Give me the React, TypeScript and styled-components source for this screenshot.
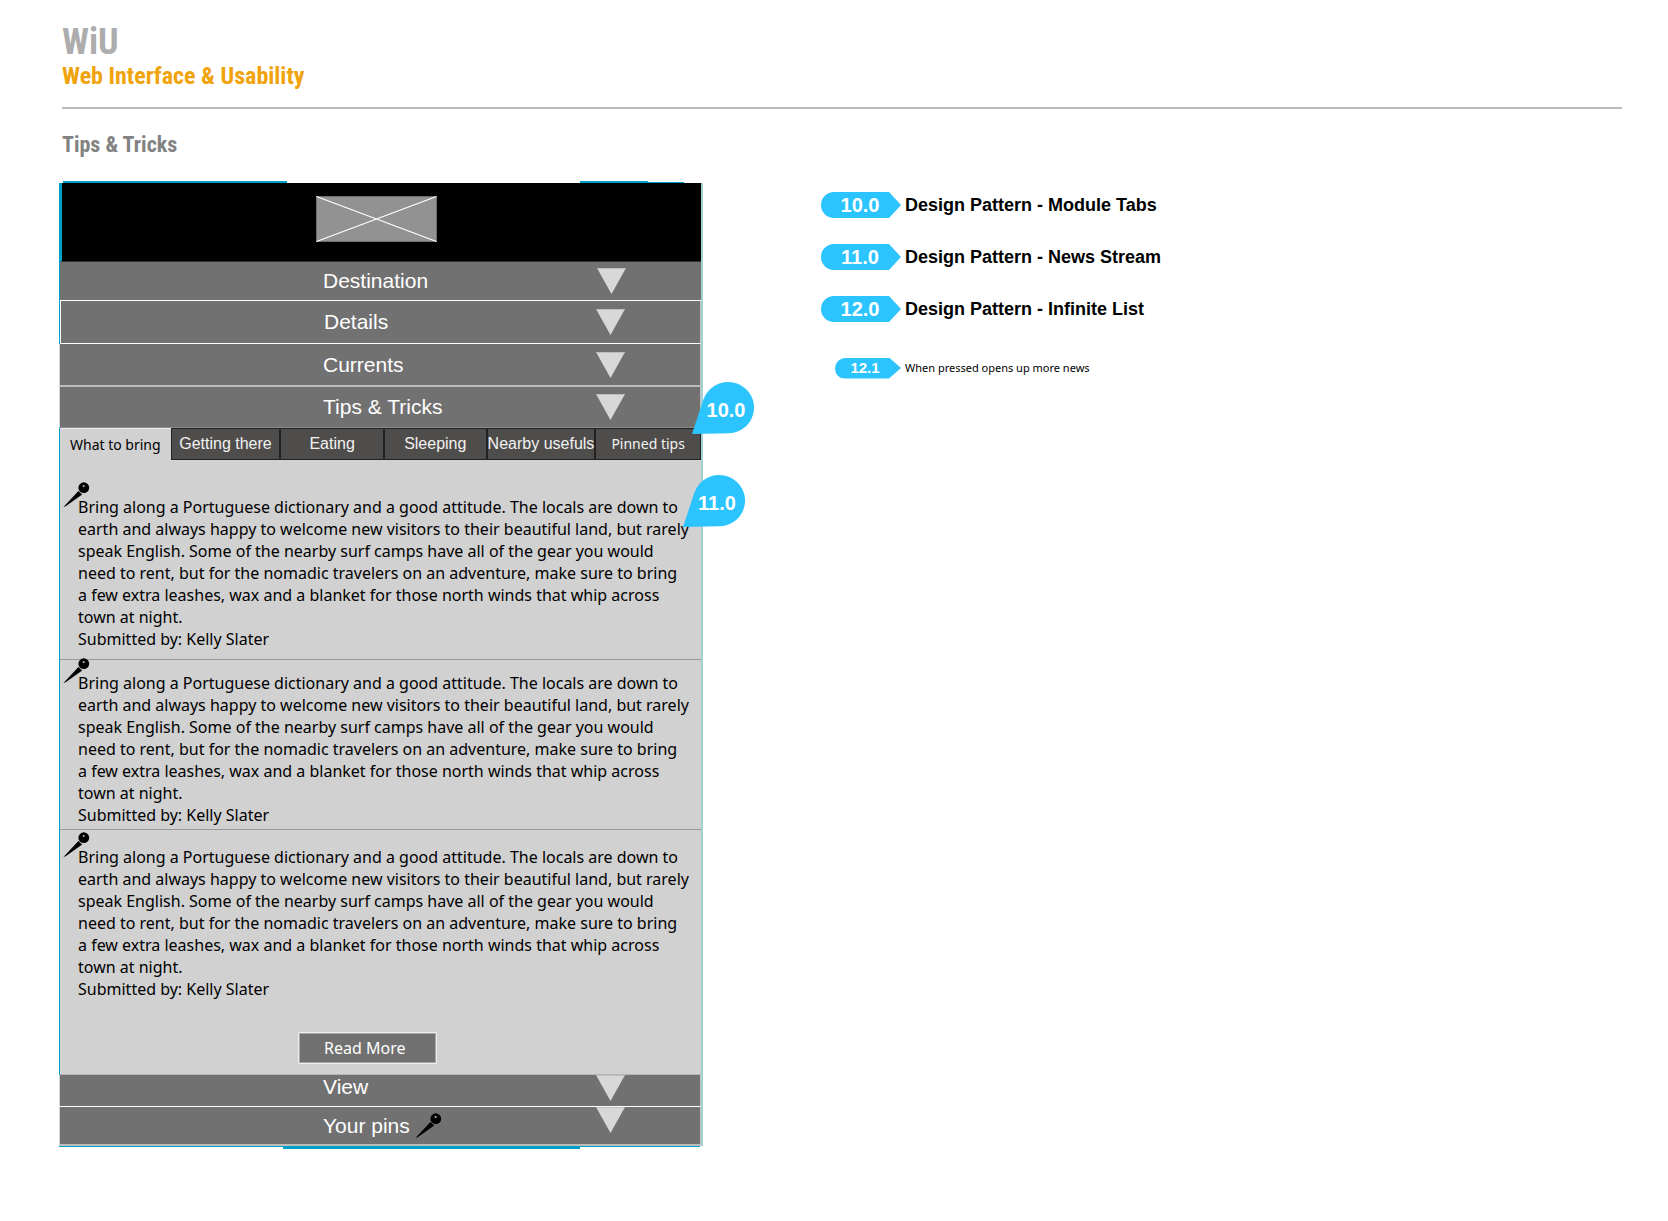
import React, { useState } from "react";
import styled, { createGlobalStyle, css } from "styled-components";

const helvetica = `"Liberation Sans", Arial, Helvetica, sans-serif`;
const humanist = `"Noto Sans", "Open Sans", sans-serif`;
const condensed = `"Roboto Condensed", "Open Sans Condensed", "Liberation Sans Narrow", sans-serif`;

const color = {
  cyan: "#009fc8",
  paleCyan: "#a5cfd6",
  marker: "#2bc4ff",
  bar: "#717171",
  panel: "#d1d1d1",
  tab: "#4f4d4b",
  tabEdge: "#222222",
};

const GlobalStyle = createGlobalStyle`
  *, *::before, *::after { box-sizing: border-box; }
  body { margin: 0; background: #ffffff; color: #000000; font-family: ${helvetica}; }
  h1, h2, h3, p, ul, ol { margin: 0; padding: 0; }
  ul, ol { list-style: none; }
  button { margin: 0; border: 0; border-radius: 0; cursor: pointer; }
  svg { display: block; }
`;

/* ---------- page ---------- */

const Page = styled.div`
  padding: 22px 46px 72px 59px;
`;

const Masthead = styled.header`
  margin-left: 3px;
  padding-bottom: 17px;
  border-bottom: 2px solid #bcbcbc;
  font-family: ${condensed};
  font-weight: 700;
`;

const Brand = styled.h1`
  font-size: 36px;
  line-height: 40px;
  color: #adadad;
`;

const Tagline = styled.p`
  font-size: 24px;
  line-height: 28px;
  color: #f0a30a;
`;

const SectionTitle = styled.h2`
  margin: 22px 0 22px 3px;
  font-family: ${condensed};
  font-size: 22px;
  line-height: 28px;
  color: #828282;
`;

const Columns = styled.main`
  display: grid;
  grid-template-columns: minmax(644px, 41%) 1fr;
  column-gap: 116px;
  align-items: start;
`;

/* ---------- wireframe device ---------- */

const Device = styled.div`
  display: flex;
  flex-direction: column;
`;

const TopTrim = styled.div`
  display: grid;
  grid-template-columns: 4fr 224fr 293fr 68fr 36fr 19fr;
  height: 2px;
`;

const BottomTrim = styled.div`
  display: grid;
  grid-template-columns: 224fr 297fr 120fr 3fr;
  height: 3px;
`;

const TrimSegment = styled.span<{ $column: number; $height: number; $low?: boolean }>`
  grid-column: ${(p) => p.$column};
  align-self: ${(p) => (p.$low ? "end" : "start")};
  height: ${(p) => p.$height}px;
  background: ${color.cyan};
`;

const Screen = styled.div`
  border-left: 1px solid ${color.cyan};
  border-right: 2px solid ${color.paleCyan};
`;

const Banner = styled.div`
  display: flex;
  height: 79px;
  padding: 13px 0 0 254px;
  border-left: 2px solid ${color.cyan};
  border-bottom: 1px solid #333333;
  background: #000000;
`;

type Frame = "inner" | "outer";

const Bar = styled.button<{
  $height: number;
  $line: string;
  $thick?: boolean;
  $frame?: Frame;
  $labelTop?: boolean;
  $arrowTop?: boolean;
}>`
  display: grid;
  grid-template-columns: 263px 1fr auto;
  align-items: center;
  width: 100%;
  height: ${(p) => p.$height}px;
  padding: 0 75px 0 0;
  border-bottom: ${(p) => (p.$thick ? 2 : 1)}px solid ${(p) => p.$line};
  background: ${color.bar};
  color: #ffffff;
  font-family: ${helvetica};
  font-size: 21px;
  line-height: 24px;
  text-align: left;

  ${(p) =>
    p.$frame === "inner" &&
    css`
      border-left: 1px solid #ffffff;
      border-right: 1px solid #c4c4c4;
    `}

  ${(p) =>
    p.$frame === "outer" &&
    css`
      width: calc(100% + 1px);
      margin-left: -1px;
      border-left: 1px solid #d0d8da;
      border-right: 1px solid #c4c4c4;
    `}

  & > span { align-self: ${(p) => (p.$labelTop ? "start" : "center")}; }
  & > svg { align-self: ${(p) => (p.$arrowTop ? "start" : "center")}; }
`;

const BarLabel = styled.span`
  grid-column: 2;
  display: flex;
  align-items: center;
  gap: 5px;
`;

const TabStrip = styled.div`
  display: grid;
  grid-template-columns: 111fr 110fr 104fr 103fr 107fr 106fr;
  height: 32px;
`;

const Tab = styled.button<{ $active: boolean; $humanist?: boolean }>`
  padding: 0;
  border: ${(p) => (p.$active ? "0" : `1px solid ${color.tabEdge}`)};
  border-top: 1px solid ${(p) => (p.$active ? "#eeeeee" : color.tabEdge)};
  background: ${(p) => (p.$active ? color.panel : color.tab)};
  color: ${(p) => (p.$active ? "#000000" : "#f2f2f2")};
  font-family: ${(p) => (p.$humanist ? humanist : helvetica)};
  font-size: ${(p) => (p.$humanist ? 14 : 16)}px;
  line-height: 20px;
  white-space: nowrap;
`;

const Panel = styled.section`
  position: relative;
  padding-bottom: 10px;
  border-bottom: 1px solid #b5b5b5;
  background: ${color.panel};
`;

const Post = styled.li<{ $top: number; $bottom: number; $last?: boolean }>`
  padding: ${(p) => p.$top}px 16px ${(p) => p.$bottom}px 18px;
  border-bottom: ${(p) => (p.$last ? "0" : "1px solid #999999")};
`;

const PostBody = styled.div`
  position: relative;
  font-family: ${humanist};
  font-size: 16px;
  line-height: 22px;
  white-space: pre;
`;

const PinSpot = styled.span`
  position: absolute;
  top: -14px;
  left: -15px;
`;

const ReadMore = styled.button`
  display: block;
  width: 139px;
  height: 32px;
  margin: 32px 0 0 238px;
  padding: 0 0 0 25px;
  border: 1px solid #eeeeee;
  background: ${color.bar};
  box-shadow: inset 0 0 0 1px #a9a9a9;
  color: #ffffff;
  font-family: ${humanist};
  font-size: 16px;
  line-height: 22px;
  text-align: left;
`;

/* ---------- callout markers ---------- */

const Anchor = styled.div`
  position: relative;
`;

const Callout = styled.div<{ $right: number; $top: number }>`
  position: absolute;
  z-index: 2;
  top: ${(p) => p.$top}px;
  right: ${(p) => p.$right}px;
  display: grid;
  place-items: center;
  width: 62px;
  height: 52px;
  color: #ffffff;
  font-size: 20px;
  font-weight: 700;
  line-height: 24px;

  & > * { grid-area: 1 / 1; }
`;

const CalloutText = styled.span`
  z-index: 1;
  padding: 4px 0 0 6px;
`;

/* ---------- legend ---------- */

const Legend = styled.ol`
  margin-top: -2px;
`;

const LegendItem = styled.li<{ $minor?: boolean }>`
  display: grid;
  grid-template-columns: 82px 1fr;
  column-gap: 4px;
  align-items: center;
  height: ${(p) => (p.$minor ? 66 : 52)}px;
  font-family: ${(p) => (p.$minor ? humanist : helvetica)};
  font-size: ${(p) => (p.$minor ? 11 : 18)}px;
  font-weight: ${(p) => (p.$minor ? 400 : 700)};
  line-height: 22px;
`;

const Badge = styled.span<{ $minor?: boolean }>`
  justify-self: end;
  display: flex;
  align-items: center;
  justify-content: center;
  width: ${(p) => (p.$minor ? 66 : 80)}px;
  height: ${(p) => (p.$minor ? 21 : 26)}px;
  padding-right: ${(p) => (p.$minor ? 6 : 2)}px;
  border-radius: 13px 0 0 13px;
  background: ${color.marker};
  clip-path: polygon(0 0, calc(100% - 12px) 0, 100% 50%, calc(100% - 12px) 100%, 0 100%);
  color: #ffffff;
  font-family: ${helvetica};
  font-size: ${(p) => (p.$minor ? 15 : 20)}px;
  font-weight: 700;
`;

/* ---------- drawings ---------- */

const Placeholder = () => (
  <svg width="121" height="46" viewBox="0 0 121 46" role="img" aria-label="Logo placeholder">
    <rect x="0.5" y="0.5" width="120" height="45" fill="#929292" stroke="#6e6e6e" />
    <path d="M0.5 0.5 L120.5 45.5 M0.5 45.5 L120.5 0.5" stroke="#ffffff" strokeWidth="1.1" fill="none" />
  </svg>
);

const Arrow = () => (
  <svg width="29" height="26" viewBox="0 0 29 26" aria-hidden="true">
    <path d="M0 0 H29 L14.5 26 Z" fill="#d8d8d8" />
    <path d="M0 0.5 H29" stroke="#bdbdbd" />
  </svg>
);

const Pin = () => (
  <svg width="27" height="26" viewBox="0 0 27 26" aria-hidden="true">
    <path d="M0.3 25.3 L15.4 9 L19.2 12.6 L3 23.9 Z" fill="#000000" />
    <circle cx="20.8" cy="5.7" r="5.4" fill="#000000" />
    <circle cx="20.6" cy="3.9" r="1" fill="#c4c4c4" />
  </svg>
);

const Drop = () => (
  <svg width="62" height="52" viewBox="0 0 62 52" aria-hidden="true">
    <path d="M0 52 L11.4 17.5 A26 25.6 0 1 1 37 51.2 Z" fill={color.marker} />
  </svg>
);

/* ---------- data ---------- */

const upperBars: { label: string; height: number; line: string; thick?: boolean; frame?: Frame }[] = [
  { label: "Destination", height: 39, line: "#ffffff" },
  { label: "Details", height: 43, line: "#ffffff", frame: "inner" },
  { label: "Currents", height: 43, line: "#bbbbbb", thick: true, frame: "outer" },
  { label: "Tips & Tricks", height: 41, line: "#8a8a8a", frame: "outer" },
];

const tabs = [
  { label: "What to bring", humanist: true },
  { label: "Getting there" },
  { label: "Eating" },
  { label: "Sleeping" },
  { label: "Nearby usefuls" },
  { label: "Pinned tips", humanist: true },
];

const tip = `Bring along a Portuguese dictionary and a good attitude. The locals are down to
earth and always happy to welcome new visitors to their beautiful land, but rarely
speak English. Some of the nearby surf camps have all of the gear you would
need to rent, but for the nomadic travelers on an adventure, make sure to bring
a few extra leashes, wax and a blanket for those north winds that whip across
town at night.`;

const posts = [
  { top: 36, bottom: 9 },
  { top: 12, bottom: 3 },
  { top: 16, bottom: 0 },
];

const legend = [
  { id: "10.0", text: "Design Pattern - Module Tabs" },
  { id: "11.0", text: "Design Pattern - News Stream" },
  { id: "12.0", text: "Design Pattern - Infinite List" },
  { id: "12.1", text: "When pressed opens up more news", minor: true },
];

export default function App() {
  const [active, setActive] = useState(0);

  return (
    <>
      <GlobalStyle />
      <Page>
        <Masthead>
          <Brand>WiU</Brand>
          <Tagline>Web Interface &amp; Usability</Tagline>
        </Masthead>
        <SectionTitle>Tips &amp; Tricks</SectionTitle>

        <Columns>
          <Device>
            <TopTrim>
              <TrimSegment $column={2} $height={2} />
              <TrimSegment $column={4} $height={2} />
              <TrimSegment $column={5} $height={1} $low />
            </TopTrim>
            <Screen>
              <Banner>
                <Placeholder />
              </Banner>
              {upperBars.map((bar) => (
                <Bar
                  key={bar.label}
                  type="button"
                  $height={bar.height}
                  $line={bar.line}
                  $thick={bar.thick}
                  $frame={bar.frame}
                >
                  <BarLabel>{bar.label}</BarLabel>
                  <Arrow />
                </Bar>
              ))}

              <Anchor>
                <Callout $top={-46} $right={-53}>
                  <Drop />
                  <CalloutText>10.0</CalloutText>
                </Callout>
                <TabStrip role="tablist">
                  {tabs.map((tab, i) => (
                    <Tab
                      key={tab.label}
                      type="button"
                      role="tab"
                      aria-selected={i === active}
                      $active={i === active}
                      $humanist={tab.humanist}
                      onClick={() => setActive(i)}
                    >
                      {tab.label}
                    </Tab>
                  ))}
                </TabStrip>
              </Anchor>

              <Panel role="tabpanel">
                <Callout $top={15} $right={-44}>
                  <Drop />
                  <CalloutText>11.0</CalloutText>
                </Callout>
                <ul>
                  {posts.map((post, i) => (
                    <Post key={i} $top={post.top} $bottom={post.bottom} $last={i === posts.length - 1}>
                      <PostBody>
                        <PinSpot>
                          <Pin />
                        </PinSpot>
                        <p>{tip}</p>
                        <p>Submitted by: Kelly Slater</p>
                      </PostBody>
                    </Post>
                  ))}
                </ul>
                <ReadMore type="button">Read More</ReadMore>
              </Panel>

              <Bar type="button" $height={32} $line="#ffffff" $frame="outer" $labelTop $arrowTop>
                <BarLabel>View</BarLabel>
                <Arrow />
              </Bar>
              <Bar type="button" $height={39} $line="#bbbbbb" $thick $frame="outer" $arrowTop>
                <BarLabel>
                  Your pins
                  <Pin />
                </BarLabel>
                <Arrow />
              </Bar>
            </Screen>
            <BottomTrim>
              <TrimSegment $column={1} $height={1} />
              <TrimSegment $column={2} $height={3} />
              <TrimSegment $column={3} $height={1} />
            </BottomTrim>
          </Device>

          <Legend>
            {legend.map((item) => (
              <LegendItem key={item.id} $minor={item.minor}>
                <Badge $minor={item.minor}>{item.id}</Badge>
                <span>{item.text}</span>
              </LegendItem>
            ))}
          </Legend>
        </Columns>
      </Page>
    </>
  );
}
